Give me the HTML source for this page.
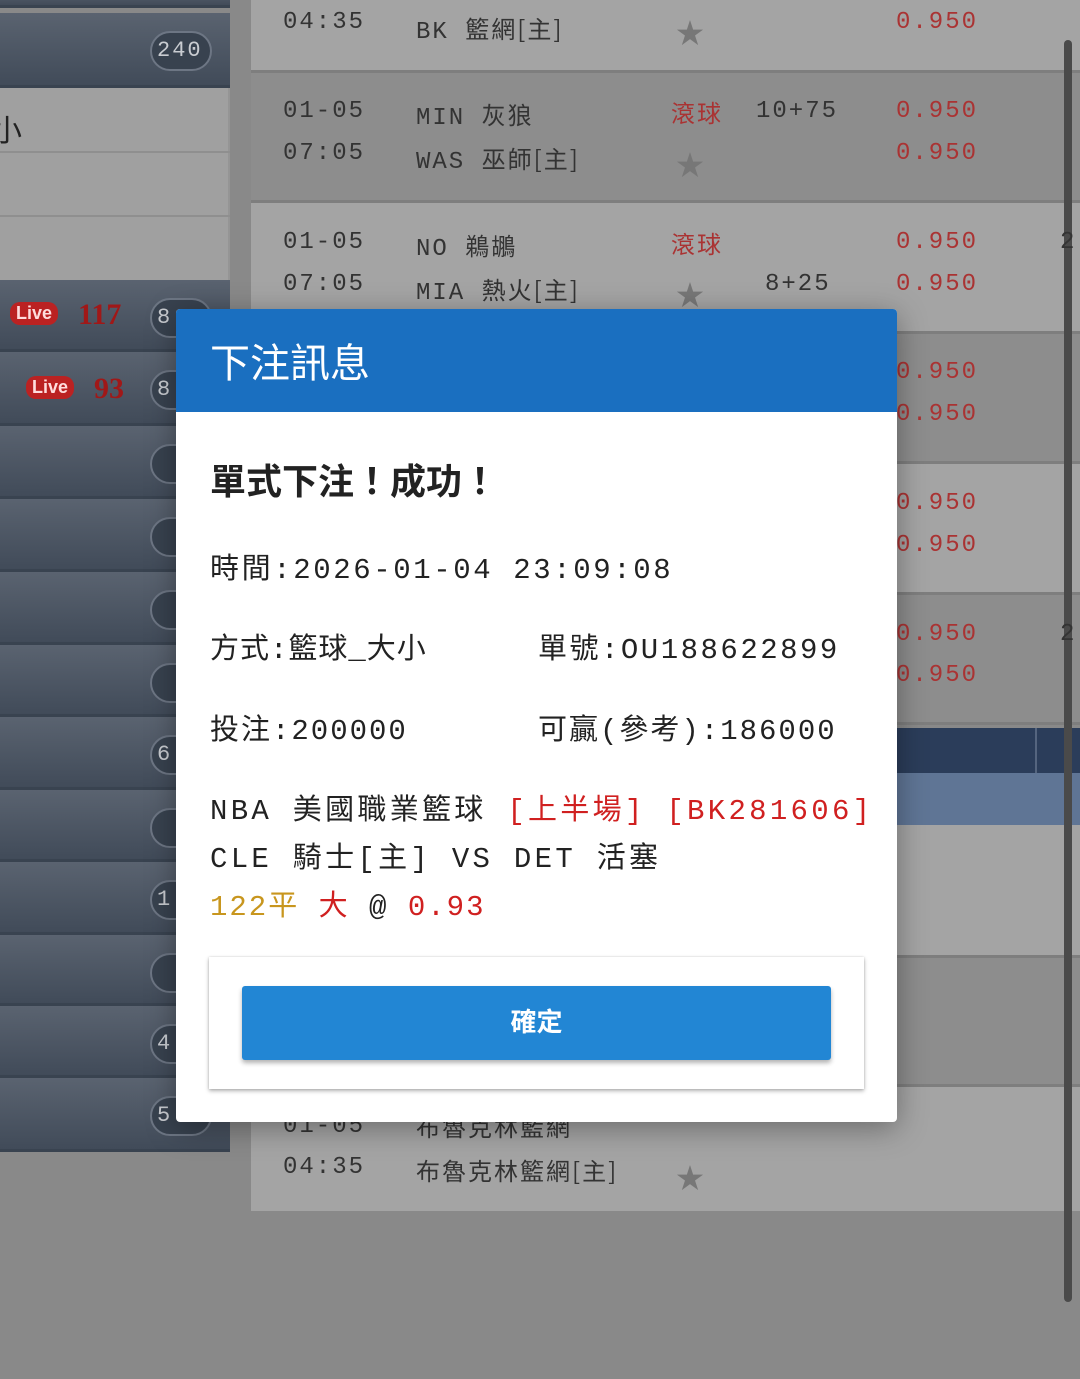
<!DOCTYPE html>
<html><head><meta charset="utf-8"><style>
*{margin:0;padding:0;box-sizing:border-box}
body{width:1080px;height:1379px;background:#898989;position:relative;overflow:hidden;font-family:"Liberation Mono","Noto Sans CJK TC",monospace;}
.a{position:absolute;white-space:nowrap}
.sb{position:absolute;left:0;width:230px;background:linear-gradient(#5a6370,#414b59);border-bottom:3px solid #394350}
.pill{position:absolute;right:18px;width:62px;height:40px;border-radius:20px;background:#38424f;border:2px solid #6d7684;color:#c9ccd1;font-size:22px;line-height:36px;text-align:left;padding-left:5px;letter-spacing:2px}
.row{position:absolute;left:251px;width:829px}
.l{background:#a4a4a4}.d{background:#8d8d8d;border-top:3px solid #7e7e7e;border-bottom:3px solid #7e7e7e}
.t{font-size:24px;color:#333;letter-spacing:2px}
.r{color:#a33;font-size:24px;letter-spacing:2px}
.star{color:#777;font-size:28px}
.live{background:#b22;color:#fdd;font:bold 18px "Liberation Sans",sans-serif;border-radius:10px;padding:1px 6px}
.lv{color:#a01818;font:bold 30px "Liberation Serif",serif}
</style></head><body>
<div class="sb" style="top:-10px;height:18px"></div>
<div class="sb" style="top:13px;height:75px"><div class="pill" style="top:18px">240</div></div>
<div class="a" style="left:0;top:88px;width:230px;height:192px;background:#a0a0a0;border-right:2px solid #959595"></div>
<div class="a" style="left:0;top:151px;width:230px;height:2px;background:#8f8f8f"></div>
<div class="a" style="left:0;top:215px;width:230px;height:2px;background:#8f8f8f"></div>
<div class="a" style="left:-8px;top:106px;font-size:30px;color:#222;font-family:'Noto Sans CJK TC',sans-serif">小</div>
<div class="sb" style="top:280px;height:72px"><div class="pill" style="top:18px">8</div><span class="a live" style="left:10px;top:22px">Live</span><span class="a lv" style="left:78px;top:18px">117</span></div>
<div class="sb" style="top:352px;height:74px"><div class="pill" style="top:18px">8</div><span class="a live" style="left:26px;top:24px">Live</span><span class="a lv" style="left:94px;top:20px">93</span></div>
<div class="sb" style="top:426px;height:73px"><div class="pill" style="top:18px"></div></div>
<div class="sb" style="top:499px;height:73px"><div class="pill" style="top:18px"></div></div>
<div class="sb" style="top:572px;height:73px"><div class="pill" style="top:18px"></div></div>
<div class="sb" style="top:645px;height:72px"><div class="pill" style="top:18px"></div></div>
<div class="sb" style="top:717px;height:73px"><div class="pill" style="top:18px">6</div></div>
<div class="sb" style="top:790px;height:72px"><div class="pill" style="top:18px"></div></div>
<div class="sb" style="top:862px;height:73px"><div class="pill" style="top:18px">1</div></div>
<div class="sb" style="top:935px;height:71px"><div class="pill" style="top:18px"></div></div>
<div class="sb" style="top:1006px;height:72px"><div class="pill" style="top:18px">4</div></div>
<div class="sb" style="top:1078px;height:74px"><div class="pill" style="top:18px">5</div></div>
<div class="row l" style="top:0;height:70px"></div>
<div class="row d" style="top:70px;height:133px"></div>
<div class="row l" style="top:203px;height:128px"></div>
<div class="row d" style="top:331px;height:133px"></div>
<div class="row l" style="top:464px;height:128px"></div>
<div class="row d" style="top:592px;height:133px"></div>
<div class="row" style="top:728px;height:45px;background:#2b3d5a"></div>
<div class="a" style="left:1035px;top:728px;width:2px;height:45px;background:#55657f"></div>
<div class="row" style="top:773px;height:52px;background:#5f7595"></div>
<div class="row l" style="top:825px;height:130px"></div>
<div class="row d" style="top:955px;height:132px"></div>
<div class="row l" style="top:1087px;height:124px"></div>
<div class="a" style="left:1064px;top:40px;width:8px;height:1262px;background:#4a4a4a;border-radius:4px"></div>
<div class="a t" style="left:283px;top:9px">04:35</div><div class="a t" style="left:416px;top:10px">BK <span style="font-family:'Noto Sans CJK TC'">籃網[主]</span></div><div class="a star" style="left:676px;top:12px">★</div><div class="a r" style="left:896px;top:9px">0.950</div>
<div class="a t" style="left:283px;top:98px">01-05</div><div class="a t" style="left:416px;top:96px">MIN <span style="font-family:'Noto Sans CJK TC'">灰狼</span></div><div class="a r" style="left:671px;top:94px;font-family:'Noto Sans CJK TC'">滾球</div><div class="a t" style="left:756px;top:98px">10+75</div><div class="a r" style="left:896px;top:98px">0.950</div>
<div class="a t" style="left:283px;top:140px">07:05</div><div class="a t" style="left:416px;top:140px">WAS <span style="font-family:'Noto Sans CJK TC'">巫師[主]</span></div><div class="a star" style="left:676px;top:144px">★</div><div class="a r" style="left:896px;top:140px">0.950</div>
<div class="a t" style="left:283px;top:229px">01-05</div><div class="a t" style="left:416px;top:227px">NO <span style="font-family:'Noto Sans CJK TC'">鵜鶘</span></div><div class="a r" style="left:671px;top:225px;font-family:'Noto Sans CJK TC'">滾球</div><div class="a r" style="left:896px;top:229px">0.950</div><div class="a t" style="left:1060px;top:229px">2</div>
<div class="a t" style="left:283px;top:271px">07:05</div><div class="a t" style="left:416px;top:271px">MIA <span style="font-family:'Noto Sans CJK TC'">熱火[主]</span></div><div class="a star" style="left:676px;top:274px">★</div><div class="a t" style="left:765px;top:271px">8+25</div><div class="a r" style="left:896px;top:271px">0.950</div>
<div class="a r" style="left:896px;top:359px">0.950</div><div class="a r" style="left:896px;top:401px">0.950</div>
<div class="a r" style="left:896px;top:490px">0.950</div><div class="a r" style="left:896px;top:532px">0.950</div>
<div class="a r" style="left:896px;top:621px">0.950</div><div class="a r" style="left:896px;top:662px">0.950</div><div class="a t" style="left:1060px;top:621px">2</div>
<div class="a t" style="left:283px;top:1113px">01-05</div><div class="a t" style="left:416px;top:1108px;font-family:'Noto Sans CJK TC'">布魯克林籃網</div>
<div class="a t" style="left:283px;top:1154px">04:35</div><div class="a t" style="left:416px;top:1152px;font-family:'Noto Sans CJK TC'">布魯克林籃網[主]</div><div class="a star" style="left:676px;top:1157px">★</div>
<div class="a" style="left:176px;top:309px;width:721px;height:813px;background:#fff;border-radius:4px;overflow:hidden;box-shadow:0 6px 30px rgba(0,0,0,.35)">
 <div style="height:103px;background:#1a6fc0;color:#fff;font:40px 'Noto Sans CJK TC',sans-serif;padding:22px 0 0 34px">下注訊息</div>
 <div class="a" style="left:34px;top:144px;font:bold 36px 'Noto Sans CJK TC',sans-serif;color:#222">單式下注！成功！</div>
 <div class="a" style="left:34px;top:236px;font-size:29px;color:#222;letter-spacing:2.6px">時間:2026-01-04 23:09:08</div>
 <div class="a" style="left:34px;top:316px;font-size:29px;color:#222;letter-spacing:1px">方式:籃球_大小</div>
 <div class="a" style="left:362px;top:316px;font-size:29px;color:#222;letter-spacing:2.5px">單號:OU188622899</div>
 <div class="a" style="left:34px;top:397px;font-size:29px;color:#222;letter-spacing:2px">投注:200000</div>
 <div class="a" style="left:362px;top:397px;font-size:29px;color:#222;letter-spacing:2px">可贏(參考):186000</div>
 <div class="a" style="left:34px;top:477px;font-size:29px;color:#222;letter-spacing:3.3px">NBA 美國職業籃球 <span style="color:#d02020">[上半場] [BK281606]</span></div>
 <div class="a" style="left:34px;top:525px;font-size:29px;color:#222;letter-spacing:3.3px">CLE 騎士[主] VS DET 活塞</div>
 <div class="a" style="left:34px;top:573px;font-size:29px;letter-spacing:2px"><span style="color:#c8961e">122平</span> <span style="color:#d02020">大</span> <span style="color:#222">@</span> <span style="color:#d02020">0.93</span></div>
 <div class="a" style="left:33px;top:648px;width:655px;height:132px;background:#fff;box-shadow:0 2px 4px rgba(0,0,0,.3),0 0 2px rgba(0,0,0,.15)">
  <div class="a" style="left:33px;top:29px;width:589px;height:74px;background:#2286d4;border-radius:3px;box-shadow:0 3px 5px rgba(0,0,0,.3);color:#fff;font:bold 26px 'Noto Sans CJK TC',sans-serif;text-align:center;line-height:70px">確定</div>
 </div>
</div>
</body></html>
